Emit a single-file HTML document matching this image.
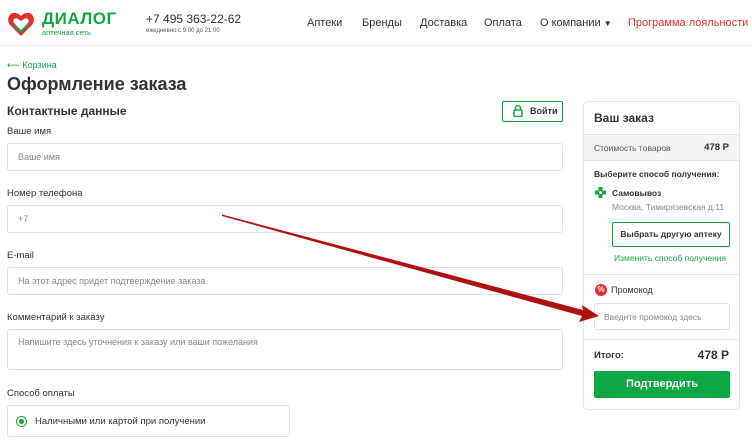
<!DOCTYPE html>
<html><head><meta charset="utf-8"><style>
*{box-sizing:border-box;margin:0;padding:0}
body{width:752px;height:444px;overflow:hidden;background:#fff;font-family:"Liberation Sans","DejaVu Sans",sans-serif;color:#333;position:relative}
.a{position:absolute;white-space:nowrap}
.inp{position:absolute;left:7px;width:556px;border:1px solid #e2e2e2;border-radius:3px;font-size:9px;color:#888;padding-left:10px}
.lbl{position:absolute;left:7px;font-size:9.5px;color:#333}
.nav{font-size:11px;color:#333;top:17px}
</style></head><body>
<div class="a" style="left:0;top:45px;width:752px;height:1px;background:#eee"></div>
<svg class="a" style="left:7px;top:11px" width="28" height="26" viewBox="0 0 28 26"><path d="M14 25 L3 14 C-1 9 2 1 8 2 C11 2 13 4 14 5 C15 4 17 2 20 2 C26 1 29 9 25 14 Z" fill="#e52f2f"/><path d="M4 12 L14 22 L24 12 C22 15 18 14 14 10 C10 14 6 15 4 12Z" fill="#12a63f"/><path d="M14 19 L7 12 C5 9 8 6 11 8 L14 10 L17 8 C20 6 23 9 21 12Z" fill="#fff"/></svg>
<div class="a" style="left:42px;top:9px;font-size:17px;font-weight:bold;color:#12a63f;letter-spacing:0.5px">ДИАЛОГ</div>
<div class="a" style="left:42px;top:28px;font-size:7.5px;color:#12a63f">аптечная сеть</div>
<div class="a" style="left:146px;top:12px;font-size:12px;color:#333">+7 495 363-22-62</div>
<div class="a" style="left:146px;top:28px;font-size:6px;color:#555">ежедневно с 9:00 до 21:00</div>
<div class="a nav" style="left:307px">Аптеки</div>
<div class="a nav" style="left:362px">Бренды</div>
<div class="a nav" style="left:420px">Доставка</div>
<div class="a nav" style="left:484px">Оплата</div>
<div class="a nav" style="left:540px">О компании <span style="font-size:8px">▼</span></div>
<div class="a nav" style="left:628px;color:#e52f2f">Программа лояльности</div>
<div class="a" style="left:7px;top:60px;font-size:9px;color:#12a63f">⟵ Корзина</div>
<div class="a" style="left:7px;top:74px;font-size:18px;font-weight:bold;color:#333">Оформление заказа</div>
<div class="a" style="left:7px;top:104px;font-size:12px;font-weight:bold;color:#333">Контактные данные</div>
<div class="a" style="left:502px;top:101px;width:61px;height:21px;border:1.5px solid #12a63f;border-radius:2px;font-size:9px;font-weight:bold;padding:4px 0 0 27px">Войти</div>
<svg class="a" style="left:513px;top:104px" width="10" height="13" viewBox="0 0 10 13"><path d="M2.5 6V4a2.5 2.5 0 0 1 5 0v2" fill="none" stroke="#12a63f" stroke-width="1.5"/><rect x="1" y="6" width="8" height="6.5" rx="1" fill="none" stroke="#12a63f" stroke-width="1.5"/></svg>
<div class="lbl" style="top:126px">Ваше имя</div>
<div class="inp" style="top:143px;height:28px;line-height:27px">Ваше имя</div>
<div class="lbl" style="top:188px">Номер телефона</div>
<div class="inp" style="top:205px;height:28px;line-height:27px">+7</div>
<div class="lbl" style="top:250px">E-mail</div>
<div class="inp" style="top:267px;height:28px;line-height:27px">На этот адрес придет подтверждение заказа</div>
<div class="lbl" style="top:312px">Комментарий к заказу</div>
<div class="inp" style="top:329px;height:41px;padding-top:7px">Напишите здесь уточнения к заказу или ваши пожелания</div>
<div class="lbl" style="top:388px">Способ оплаты</div>
<div class="a" style="left:7px;top:405px;width:283px;height:32px;border:1px solid #e2e2e2;border-radius:3px;font-size:9.5px;padding:10px 0 0 27px;color:#333">Наличными или картой при получении</div>
<div class="a" style="left:16px;top:416px;width:11px;height:11px;border:1.5px solid #12a63f;border-radius:50%"></div>
<div class="a" style="left:19px;top:419px;width:5px;height:5px;background:#12a63f;border-radius:50%"></div>

<div class="a" style="left:583px;top:101px;width:157px;height:309px;border:1px solid #e6e6e6;border-radius:5px;overflow:hidden">
<div class="a" style="left:10px;top:9px;font-size:12px;font-weight:bold">Ваш заказ</div>
<div class="a" style="left:0;top:32px;width:157px;height:27px;background:#f5f5f5;border-top:1px solid #e6e6e6;border-bottom:1px solid #e6e6e6"></div>
<div class="a" style="left:10px;top:41px;font-size:8.5px;color:#555">Стоимость товаров</div>
<div class="a" style="right:10px;top:40px;font-size:9.5px;font-weight:bold">478 Р</div>
<div class="a" style="left:10px;top:67px;font-size:8.5px;font-weight:bold">Выберите способ получения:</div>
<svg class="a" style="left:11px;top:85px" width="11" height="11" viewBox="0 0 11 11"><path d="M3.5 0h4v3.5H11v4H7.5V11h-4V7.5H0v-4h3.5z" fill="#12a63f"/><circle cx="5.5" cy="5.5" r="1.5" fill="#fff"/></svg>
<div class="a" style="left:28px;top:86px;font-size:8.5px;font-weight:bold">Самовывоз</div>
<div class="a" style="left:28px;top:100px;font-size:8.5px;color:#888">Москва, Тимирязевская д.11</div>
<div class="a" style="left:28px;top:120px;width:118px;height:25px;border:1.5px solid #12a63f;border-radius:2px;font-size:8.5px;font-weight:bold;text-align:center;line-height:22px">Выбрать другую аптеку</div>
<div class="a" style="left:30px;top:151px;font-size:8.5px;color:#12a63f">Изменить способ получения</div>
<div class="a" style="left:0;top:172px;width:157px;height:1px;background:#e6e6e6"></div>
<div class="a" style="left:11px;top:182px;width:12px;height:12px;background:#e52f2f;border-radius:50%;color:#fff;font-size:8px;font-weight:bold;text-align:center;line-height:12px">%</div>
<div class="a" style="left:27px;top:183px;font-size:9px">Промокод</div>
<div class="a" style="left:10px;top:201px;width:136px;height:27px;border:1px solid #e2e2e2;border-radius:3px;font-size:8.5px;color:#888;padding:8px 0 0 9px">Введите промокод здесь</div>
<div class="a" style="left:0;top:237px;width:157px;height:1px;background:#e6e6e6"></div>
<div class="a" style="left:10px;top:248px;font-size:9.5px;font-weight:bold">Итого:</div>
<div class="a" style="right:10px;top:246px;font-size:12px;font-weight:bold">478 Р</div>
<div class="a" style="left:10px;top:269px;width:136px;height:27px;background:#0ca846;border-radius:2px;color:#fff;font-size:11px;font-weight:bold;text-align:center;line-height:27px">Подтвердить</div>
</div>
<svg class="a" style="left:0;top:0" width="752" height="444"><path d="M222 214.5 L583 310 L582 305 L599 316 L579 322 L582 316 L222 216 Z" fill="#b01010"/></svg>
</body></html>
